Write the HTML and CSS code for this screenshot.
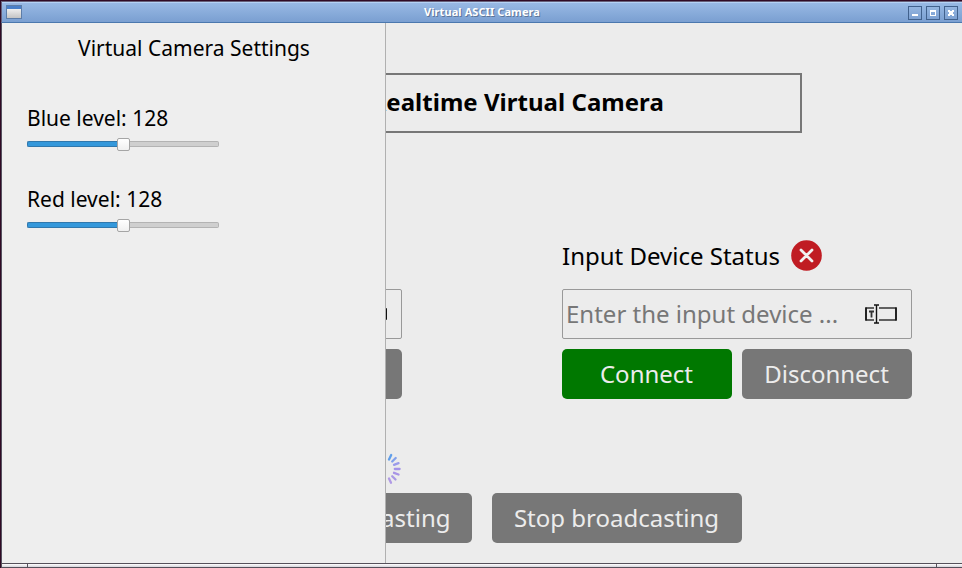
FILE: index.html
```html
<!DOCTYPE html>
<html lang="en">
<head>
<meta charset="utf-8">
<title>Virtual ASCII Camera</title>
<link rel="stylesheet" href="styles.css">
</head>
<body>
<div class="window">
  <header class="titlebar">
    <svg class="app-icon" width="16" height="15" viewBox="0 0 16 15"><defs><linearGradient id="g" x2="0" y2="1"><stop stop-color="#efefef"/><stop offset="1" stop-color="#c4c4c4"/></linearGradient></defs><path fill="#5d7da8" d="M0 0h16v14H0z"/><path fill="#4a7fc8" d="M1 1h14v3H1z"/><path fill="url(#g)" d="M1 4h14v9H1z"/></svg>
    <h1 class="caption">Virtual ASCII Camera</h1>
    <div class="controls">
      <button class="control" aria-label="Minimize"><svg width="12" height="12"><path fill="#fff" d="M3 7h6v2H3z"/></svg></button>
      <button class="control" aria-label="Maximize"><svg width="12" height="12"><path fill="#fff" fill-rule="evenodd" d="M3 3h6v6H3zM4 5h4v3H4z"/></svg></button>
      <button class="control" aria-label="Close"><svg width="12" height="12"><path fill="#fff" d="M3 3h2v1h2V3h2v2H8v2h1v2H7V8H5v1H3V7h1V5H3z"/></svg></button>
    </div>
  </header>
  <div class="content">
    <main class="page">
      <h2 class="banner">ASCII Realtime Virtual Camera</h2>
      <div class="devices">
        <section class="device">
          <div class="status">Output Device Status</div>
          <div class="field"><span class="placeholder"></span>
            <svg class="field-icon" width="32" height="20" viewBox="0 0 32 20"><path fill="none" stroke="#111" d="M9 4.5H.5v11H9M14 4.5h17.5v11H14"/></svg>
          </div>
          <div class="actions"><button class="btn connect">Connect</button><button class="btn">Disconnect</button></div>
        </section>
        <section class="device">
          <div class="status">Input Device Status
            <svg width="31" height="31" viewBox="0 0 31 31"><circle cx="15.5" cy="15.5" r="15.3" fill="#c01c23"/><path d="M10 10l11 11M21 10L10 21" stroke="#f1f1f1" stroke-width="2.8" stroke-linecap="round"/></svg>
          </div>
          <div class="field"><span class="placeholder">Enter the input device ...</span>
            <svg class="field-icon" width="32" height="20" viewBox="0 0 32 20"><path fill="none" stroke="#333" stroke-width="1.3" d="M9 4H1v12H9M14 4h17v12H14"/><path stroke="#111" stroke-width="1.6" d="M1 3.5v13M31 3.5v13"/><path fill="none" stroke="#111" stroke-width="1.4" d="M9 1h2l.5.5L12 1h2M11.5 1v18M9 19h5"/><path fill="none" stroke="#333" stroke-width="1.8" d="M4 7.5h5M6.5 7v6.5"/></svg>
          </div>
          <div class="actions"><button class="btn connect">Connect</button><button class="btn">Disconnect</button></div>
        </section>
      </div>
      <svg class="spinner" width="32" height="32" viewBox="-16 -16 32 32"><g stroke-width="2.3" stroke-linecap="round"><path stroke="#5f9eea" d="M4-9.5L6.2-14"/><path stroke="#82a1eb" d="M7.2-7.5L10.7-11"/><path stroke="#9b9bea" d="M9-4.2L13.5-5.8"/><path stroke="#a493e8" d="M9.8 0H14.6"/><path stroke="#a894e6" d="M9 3.8L13.5 5.5"/><path stroke="#a999e4" d="M7.2 7.2L10.5 10.5"/><path stroke="#b09ae5" d="M4 9.5L6 13.8"/></g></svg>
      <div class="broadcast"><button class="btn">Start broadcasting</button><button class="btn">Stop broadcasting</button></div>
    </main>
    <aside class="drawer">
      <h2 class="drawer-title">Virtual Camera Settings</h2>
      <div class="level">
        <label class="label">Blue level: 128</label>
        <div class="slider"><div class="fill"></div><div class="knob"></div><div class="rest"></div></div>
      </div>
      <div class="level">
        <label class="label">Red level: 128</label>
        <div class="slider"><div class="fill"></div><div class="knob"></div><div class="rest"></div></div>
      </div>
    </aside>
  </div>
  <footer class="resize-bar"><div class="grip"></div><div class="grip middle"></div><div class="grip"></div></footer>
</div>
</body>
</html>
```
FILE: styles.css
```css
* { box-sizing: border-box; }
body { margin: 0; font-family: "Noto Sans", sans-serif; color: #000; }
h1, h2 { margin: 0; font-weight: 400; }
button { font-family: inherit; border: 0; padding: 0; }
svg { display: block; flex: none; }

.window {
  width: 962px; height: 568px; overflow: hidden;
  display: flex; flex-direction: column;
  border-left: 1px solid #300a24; border-top: 1px solid #300a24;
  background: #ececec;
}
.titlebar {
  height: 22px; flex: none; display: flex; align-items: center;
  padding: 0 4px 0 4px;
  border-top: 1px solid #67617a; border-left: 1px solid #67617a; border-bottom: 1px solid #4b78ae;
  background: linear-gradient(#b5d2f5 0 1px, #98b9e4 1px, #7a9fd1);
}
.app-icon { margin-top: 1px; }
.caption {
  flex: 1; text-align: center; padding-left: 34px;
  font-size: 11px; line-height: 20px; font-weight: 700; color: #fff;
  letter-spacing: .08px;
  text-shadow: 1px 1px 0 #5d7699;
}
.controls { display: flex; gap: 4px; margin-top: 1px; }
.control {
  width: 14px; height: 14px; border: 1px solid #41618d;
  background: linear-gradient(#94b5e0, #7da1d2);
}
.content {
  flex: none; height: 540px; position: relative; overflow: hidden;
  border-left: 1px solid #55505f;
}
.page {
  width: 960px; height: 540px; padding: 50px 50px 0;
  display: flex; flex-direction: column; align-items: center;
}
.banner {
  width: 640px; height: 60px; border: 2px solid #777;
  text-align: center; font-size: 24px; line-height: 54px; font-weight: 700;
  letter-spacing: .03px;
}
.devices { width: 860px; margin-top: 102px; display: flex; justify-content: space-between; }
.device { width: 350px; }
.status { height: 40px; display: flex; align-items: center; gap: 11px; font-size: 24px; }
.field {
  margin-top: 14px; height: 50px; border: 1px solid #999; border-radius: 2px;
  display: flex; align-items: center; justify-content: space-between;
  padding: 0 14px 0 3px; font-size: 24px; color: #777;
}
.placeholder { padding-bottom: 2px; }
.actions { display: flex; gap: 10px; margin-top: 10px; }
.btn {
  width: 170px; height: 50px; border-radius: 5px; padding-right: 1px;
  background: #777; color: #ececec; font-size: 24px; line-height: 50px;
}
.btn.connect { background: #007800; }
.spinner { margin-top: 54px; margin-right: 195px; }
.broadcast { display: flex; gap: 20px; margin-top: 8px; }
.broadcast .btn { width: 250px; }

.drawer {
  position: absolute; left: 0; top: 0; width: 384px; height: 540px;
  background: #eee; border-right: 1px solid #b0b0b0; padding: 10px 25px;
}
.drawer-title { font-size: 21px; line-height: 30px; text-align: center; margin-bottom: 40px; padding-left: 1px; }
.level { height: 81px; }
.label { display: block; font-size: 21px; line-height: 30px; }
.slider { width: 192px; height: 14px; margin-top: 4px; display: flex; align-items: center; }
.fill { width: 90px; height: 6px; border: 1px solid #3078ad; border-right: 0; border-radius: 2px 0 0 2px; background: #3498db; }
.knob { width: 13px; height: 13px; border: 1px solid #a5a5a5; border-radius: 2px; background: linear-gradient(#fff, #f0f0f0); }
.rest { flex: 1; height: 6px; border: 1px solid #b3b3b3; border-left: 0; border-radius: 0 2px 2px 0; background: #cfcfcf; }

.resize-bar { height: 5px; flex: none; display: flex; gap: 1px; background: #55505a; padding: 1px 0 1px 1px; }
.grip { width: 25px; height: 3px; background: linear-gradient(#fff, #d5d3da); }
.grip.middle { flex: 1; }
```
